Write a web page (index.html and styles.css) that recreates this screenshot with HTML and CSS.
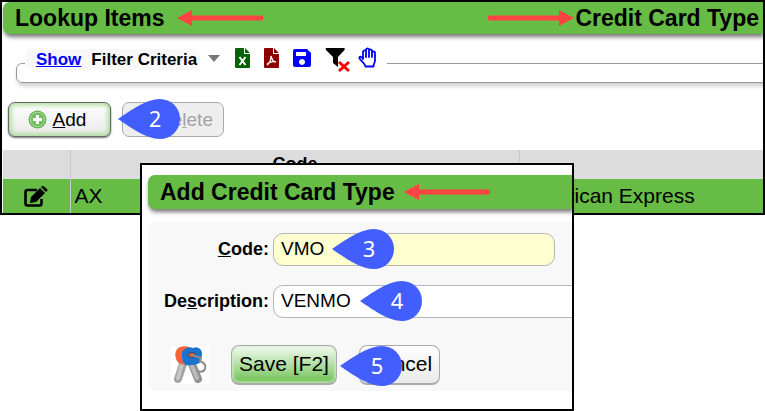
FILE: index.html
```html
<!DOCTYPE html>
<html lang="en">
<head>
    <meta charset="utf-8">
    <title>Lookup Items</title>
    <link rel="stylesheet" href="styles.css">
</head>
<body>
    <main class="panel">
        <header class="titlebar">
            <h1>Lookup Items</h1>
            <svg class="arrow" width="86" height="16" viewBox="0 0 86 16"><path d="M13 8H84" stroke="#ff4343" stroke-width="5" stroke-linecap="round"/><path d="M0 8L15 0V16z" fill="#ff4343"/></svg>
            <svg class="arrow arrow-right" width="86" height="16" viewBox="0 0 86 16"><path d="M2 8H73" stroke="#ff4343" stroke-width="5" stroke-linecap="round"/><path d="M86 8L71 0V16z" fill="#ff4343"/></svg>
            <h1>Credit Card Type</h1>
        </header>

        <fieldset class="filter">
            <legend>
                <span class="filter-label"><a href="#">Show</a>Filter Criteria</span>
                <span class="caret"></span>
                <svg class="icon-file" width="15" height="20" viewBox="0 0 15 20">
                    <path fill="#006400" d="M1 0H9V6H15V19a1 1 0 0 1-1 1H1a1 1 0 0 1-1-1V1a1 1 0 0 1 1-1zM10 0L15 5H10z"/>
                    <path d="M4.500 9L10.500 17M10.500 9L4.500 17" stroke="#fff" stroke-width="2"/>
                </svg>
                <svg class="icon-file" width="15" height="20" viewBox="0 0 15 20">
                    <path fill="#8b0000" d="M1 0H9V6H15V19a1 1 0 0 1-1 1H1a1 1 0 0 1-1-1V1a1 1 0 0 1 1-1zM10 0L15 5H10z"/>
                    <path d="M3 17C6 15 7 11 7 8C8 12 10 14 12 14C9 13 6 14 3 16" fill="none" stroke="#fff" stroke-width="1.3"/>
                </svg>
                <svg class="icon-save" width="18" height="18" viewBox="0 0 18 18">
                    <path fill="#00f" fill-rule="evenodd" d="M2 0H14L18 4V16a2 2 0 0 1-2 2H2a2 2 0 0 1-2-2V2a2 2 0 0 1 2-2zM3 3V7H13V3zM9 10a3 3 0 1 0 0.010 0z"/>
                </svg>
                <svg class="icon-funnel" width="25" height="25" viewBox="0 0 25 25">
                    <path d="M1 0H19Q20.500 0.500 19.500 2L13 9V19L8 15V9L1 2Q0 0.500 1 0z"/>
                    <path d="M14 14L24 23M24 14L14 23" stroke="#f00" stroke-width="3"/>
                </svg>
                <svg class="icon-hand" width="19" height="21" viewBox="0 0 19 21">
                    <path d="M5 12V4.500a1.600 1.600 0 0 1 3 0V10V2.500a1.600 1.600 0 0 1 3 0V10V3.500a1.600 1.600 0 0 1 3 0V10V6a1.500 1.500 0 0 1 3 0V13C17 16 15.500 16.500 15.500 19.500H7.500C6.500 16 4 15 1.500 11.500C1 9.500 3 8.500 5 12z" fill="#fff" stroke="#00f" stroke-width="1.800" stroke-linejoin="round"/>
                </svg>
            </legend>
        </fieldset>

        <div class="toolbar">
            <button type="button" class="btn btn-add">
                <svg width="19" height="19" viewBox="0 0 19 19"><circle cx="9.500" cy="9.500" r="9" fill="#5cae4b"/><circle cx="9.500" cy="9.500" r="7.300" fill="#74be60" stroke="#b5dfa9"/><path d="M9.500 5V14M5 9.500H14" stroke="#fff" stroke-width="3"/></svg>
                <span><u>A</u>dd</span>
            </button>
            <div class="marked">
                <button type="button" class="btn btn-delete" disabled>
                    <svg width="19" height="19" viewBox="0 0 19 19"><circle cx="9.500" cy="9.500" r="9" fill="#bbb"/><path d="M5 9.500H14" stroke="#fff" stroke-width="3"/></svg>
                    <span>De<u>l</u>ete</span>
                </button>
                <div class="pin pin-2"><svg width="62" height="40" viewBox="0 0 62 40"><path d="M0 20C12 12 28 0 42 0A20 20 0 0 1 42 40C28 40 12 28 0 20z"/></svg><span>2</span></div>
            </div>
        </div>

        <table class="items">
            <thead>
                <tr>
                    <th class="col-edit"></th>
                    <th>Code</th>
                    <th class="col-description"></th>
                </tr>
            </thead>
            <tbody>
                <tr>
                    <td class="edit">
                        <svg width="24" height="21" viewBox="0 0 24 21">
                            <path d="M13 4H3.500Q1.500 4 1.500 6V17.500Q1.500 19.500 3.500 19.500H15.500Q17.500 19.500 17.500 17.500V13" fill="none" stroke="#000" stroke-width="2.600"/>
                            <path d="M7 11L16 2L21 7L12 16L6 17zM17 1L18 0Q19 -0.500 20 0.500L23 3Q24 4 23 5L22 6z"/>
                        </svg>
                    </td>
                    <td>AX</td>
                    <td>American Express</td>
                </tr>
            </tbody>
        </table>
    </main>

    <section class="dialog">
        <header class="titlebar">
            <h2>Add Credit Card Type</h2>
            <svg class="arrow" width="86" height="16" viewBox="0 0 86 16"><path d="M13 8H84" stroke="#ff4343" stroke-width="5" stroke-linecap="round"/><path d="M0 8L15 0V16z" fill="#ff4343"/></svg>
        </header>

        <form class="form">
            <div class="row">
                <label for="code"><u>C</u>ode:</label>
                <div class="marked">
                    <input type="text" id="code" class="required" value="VMO">
                    <div class="pin pin-3"><svg width="62" height="40" viewBox="0 0 62 40"><path d="M0 20C12 12 28 0 42 0A20 20 0 0 1 42 40C28 40 12 28 0 20z"/></svg><span>3</span></div>
                </div>
            </div>
            <div class="row">
                <label for="description">De<u>s</u>cription:</label>
                <div class="marked">
                    <input type="text" id="description" class="wide" value="VENMO">
                    <div class="pin pin-4"><svg width="62" height="40" viewBox="0 0 62 40"><path d="M0 20C12 12 28 0 42 0A20 20 0 0 1 42 40C28 40 12 28 0 20z"/></svg><span>4</span></div>
                </div>
            </div>
            <div class="actions">
                <svg class="keys" width="38" height="38" viewBox="0 0 38 38">
                    <rect width="38" height="38" fill="#fff"/>
                    <path d="M12 18L7 33" stroke="#a2a2a2" stroke-width="8" stroke-linecap="round"/>
                    <path d="M11 18L7 32" stroke="#c6c6c6" stroke-width="4" stroke-linecap="round"/>
                    <path d="M7 2Q11 -1 18 1L22 8L17 18Q9 20 6 15Q2 7 7 2z" fill="#f2643a"/>
                    <path d="M21 18L27 33" stroke="#939393" stroke-width="8" stroke-linecap="round"/>
                    <path d="M20 18L26 32" stroke="#bababa" stroke-width="4" stroke-linecap="round"/>
                    <path d="M14 3Q18 0 22 2Q27 0 30 4Q32 8 30 12Q31 17 26 18Q20 20 15 19Q11 16 11 11Q10 5 14 3z" fill="#1a74cf"/>
                    <ellipse cx="21" cy="9" rx="4" ry="2.500" fill="#e2632f" stroke="#234b80"/>
                    <path d="M21 9L30 12L29 15Q36 18 34 23Q32 27 27 25" fill="none" stroke="#8b8b8b" stroke-width="2"/>
                </svg>
                <button type="submit" class="btn btn-save">Save [F2]</button>
                <div class="marked">
                    <button type="button" class="btn btn-cancel">Cancel</button>
                    <div class="pin pin-5"><svg width="62" height="40" viewBox="0 0 62 40"><path d="M0 20C12 12 28 0 42 0A20 20 0 0 1 42 40C28 40 12 28 0 20z"/></svg><span>5</span></div>
                </div>
            </div>
        </form>
    </section>
</body>
</html>
```
FILE: styles.css
```css
* {
    box-sizing: border-box;
}
body {
    margin: 0;
    background-color: #fff;
    color: #000;
    font-family: "Liberation Sans", Arial, sans-serif;
}
.panel {
    border: 2px solid #000;
    padding-left: 1px;
    overflow: hidden;
}

/* green title bars */
.titlebar {
    display: flex;
    align-items: center;
    height: 32px;
    padding: 0 4px 0 12px;
    background-color: #66bc45;
    border-radius: 7px 0 0 7px;
    box-shadow: 1px 3px 4px #777;
}
.titlebar h1,
.titlebar h2 {
    margin: 0;
    font-size: 23px;
    line-height: 32px;
    white-space: nowrap;
}
.arrow {
    flex: none;
    margin-left: 12px;
}
.arrow-right {
    margin-left: auto;
    margin-right: 1px;
}

/* filter box */
.filter {
    margin: 15px -10px 0 13px;
    padding: 0 0 5px 8px;
    border: 1px solid #999;
    border-radius: 6px;
    box-shadow: 1px 3px 4px #ccc;
}
.filter legend {
    display: flex;
    align-items: flex-start;
    height: 28px;
    padding: 0 10px 0 0;
}
.filter-label {
    padding: 0 3px 0 11px;
    background-color: #f8f8f8;
    border-radius: 7px;
    font-size: 17px;
    font-weight: bold;
    line-height: 21px;
}
.filter-label a {
    margin-right: 10px;
    color: #00f;
}
.caret {
    margin: 6px 15px 0 8px;
    border: 6px solid transparent;
    border-top: 7px solid #777;
    border-bottom: 0;
}
.icon-file {
    margin: -1px 14px 0 0;
}
.icon-save {
    margin-right: 14px;
}
.icon-funnel {
    margin: -1px 8px 0 0;
}
.icon-hand {
    margin-top: -2px;
}

/* buttons */
.toolbar {
    display: flex;
    gap: 11px;
    padding: 19px 5px 13px;
}
.btn {
    display: flex;
    align-items: center;
    justify-content: center;
    padding: 0;
    border: 1px solid #aaa;
    border-radius: 7px;
    background-image: linear-gradient(#fff, #e9e9e9);
    color: #000;
    font-family: inherit;
    font-size: 21px;
}
.btn-add,
.btn-delete {
    gap: 6px;
    height: 35px;
    font-size: 19px;
}
.btn-add {
    width: 103px;
    padding-right: 5px;
    border: 1px solid #666;
    box-shadow: inset 0 0 5px 2px #a5dd92, 0 1px 2px #777;
}
.btn-delete {
    width: 102px;
    background: #eee;
    color: #a3a3a3;
}
.marked {
    position: relative;
}

/* numbered callouts */
.pin {
    position: absolute;
    width: 62px;
    height: 40px;
    color: #fff;
    font-family: "Noto Sans", sans-serif;
    font-size: 22px;
    line-height: 38px;
    text-align: center;
}
.pin svg {
    position: absolute;
    left: 0;
    top: 0;
    fill: #425eff;
}
.pin span {
    position: relative;
    padding-left: 12px;
}
.pin-2 {
    left: -4px;
    top: -3px;
}
.pin-3 {
    left: 59px;
    top: -4px;
}
.pin-4 {
    left: 87px;
    top: -4px;
}
.pin-5 {
    left: -19px;
    top: 1px;
}

/* items table */
.items {
    width: 100%;
    table-layout: fixed;
    border-collapse: collapse;
}
.items th {
    height: 29px;
    padding: 0;
    background-color: #dcdcdc;
    font-size: 18px;
}
.items td {
    height: 34px;
    padding: 0 4px;
    background-color: #66bc45;
    font-size: 21px;
}
.items th + th,
.items td + td {
    border-left: 1px solid #c8c8c8;
}
.items .col-edit {
    width: 67px;
}
.items .col-description {
    width: 32%;
}
.items .edit {
    text-align: center;
}
.edit svg {
    display: block;
    margin: 0 auto;
}

/* add dialog, laid over the bottom of the panel */
.dialog {
    position: relative;
    margin: -52px 25% 0 140px;
    padding: 10px 0 18px 6px;
    border: 2px solid #000;
    background-color: #fff;
    overflow: hidden;
}
.dialog .titlebar {
    height: 34px;
}
.dialog .arrow {
    margin-left: 9px;
}
.form {
    margin-top: 13px;
    padding: 11px 0 6px;
    background-color: #f8f8f8;
    border-radius: 7px 0 0 7px;
}
.row {
    display: flex;
    align-items: center;
    margin-bottom: 19px;
}
.row label {
    flex: none;
    width: 121px;
    margin-right: 4px;
    font-size: 18px;
    font-weight: bold;
    text-align: right;
}
.row input {
    display: block;
    width: 282px;
    height: 33px;
    padding: 0 7px 1px;
    border: 1px solid #b5b5b5;
    border-radius: 10px;
    background-color: #fff;
    color: #000;
    font-family: inherit;
    font-size: 19px;
}
.row .required {
    background-color: #ffffcf;
}
.row .wide {
    width: 340px;
}
.actions {
    display: flex;
    align-items: center;
    padding: 8px 0 0 23px;
}
.keys {
    margin-right: 22px;
}
.btn-save,
.btn-cancel {
    height: 40px;
    padding-bottom: 2px;
    border-bottom: 2px solid #aaa;
    border-radius: 8px;
}
.btn-save {
    width: 106px;
    margin-right: 22px;
    background-image: linear-gradient(#f4fbf2, #6fc254);
    box-shadow: inset 0 0 3px 1px #d5efcc;
}
.btn-cancel {
    width: 81px;
}
```
